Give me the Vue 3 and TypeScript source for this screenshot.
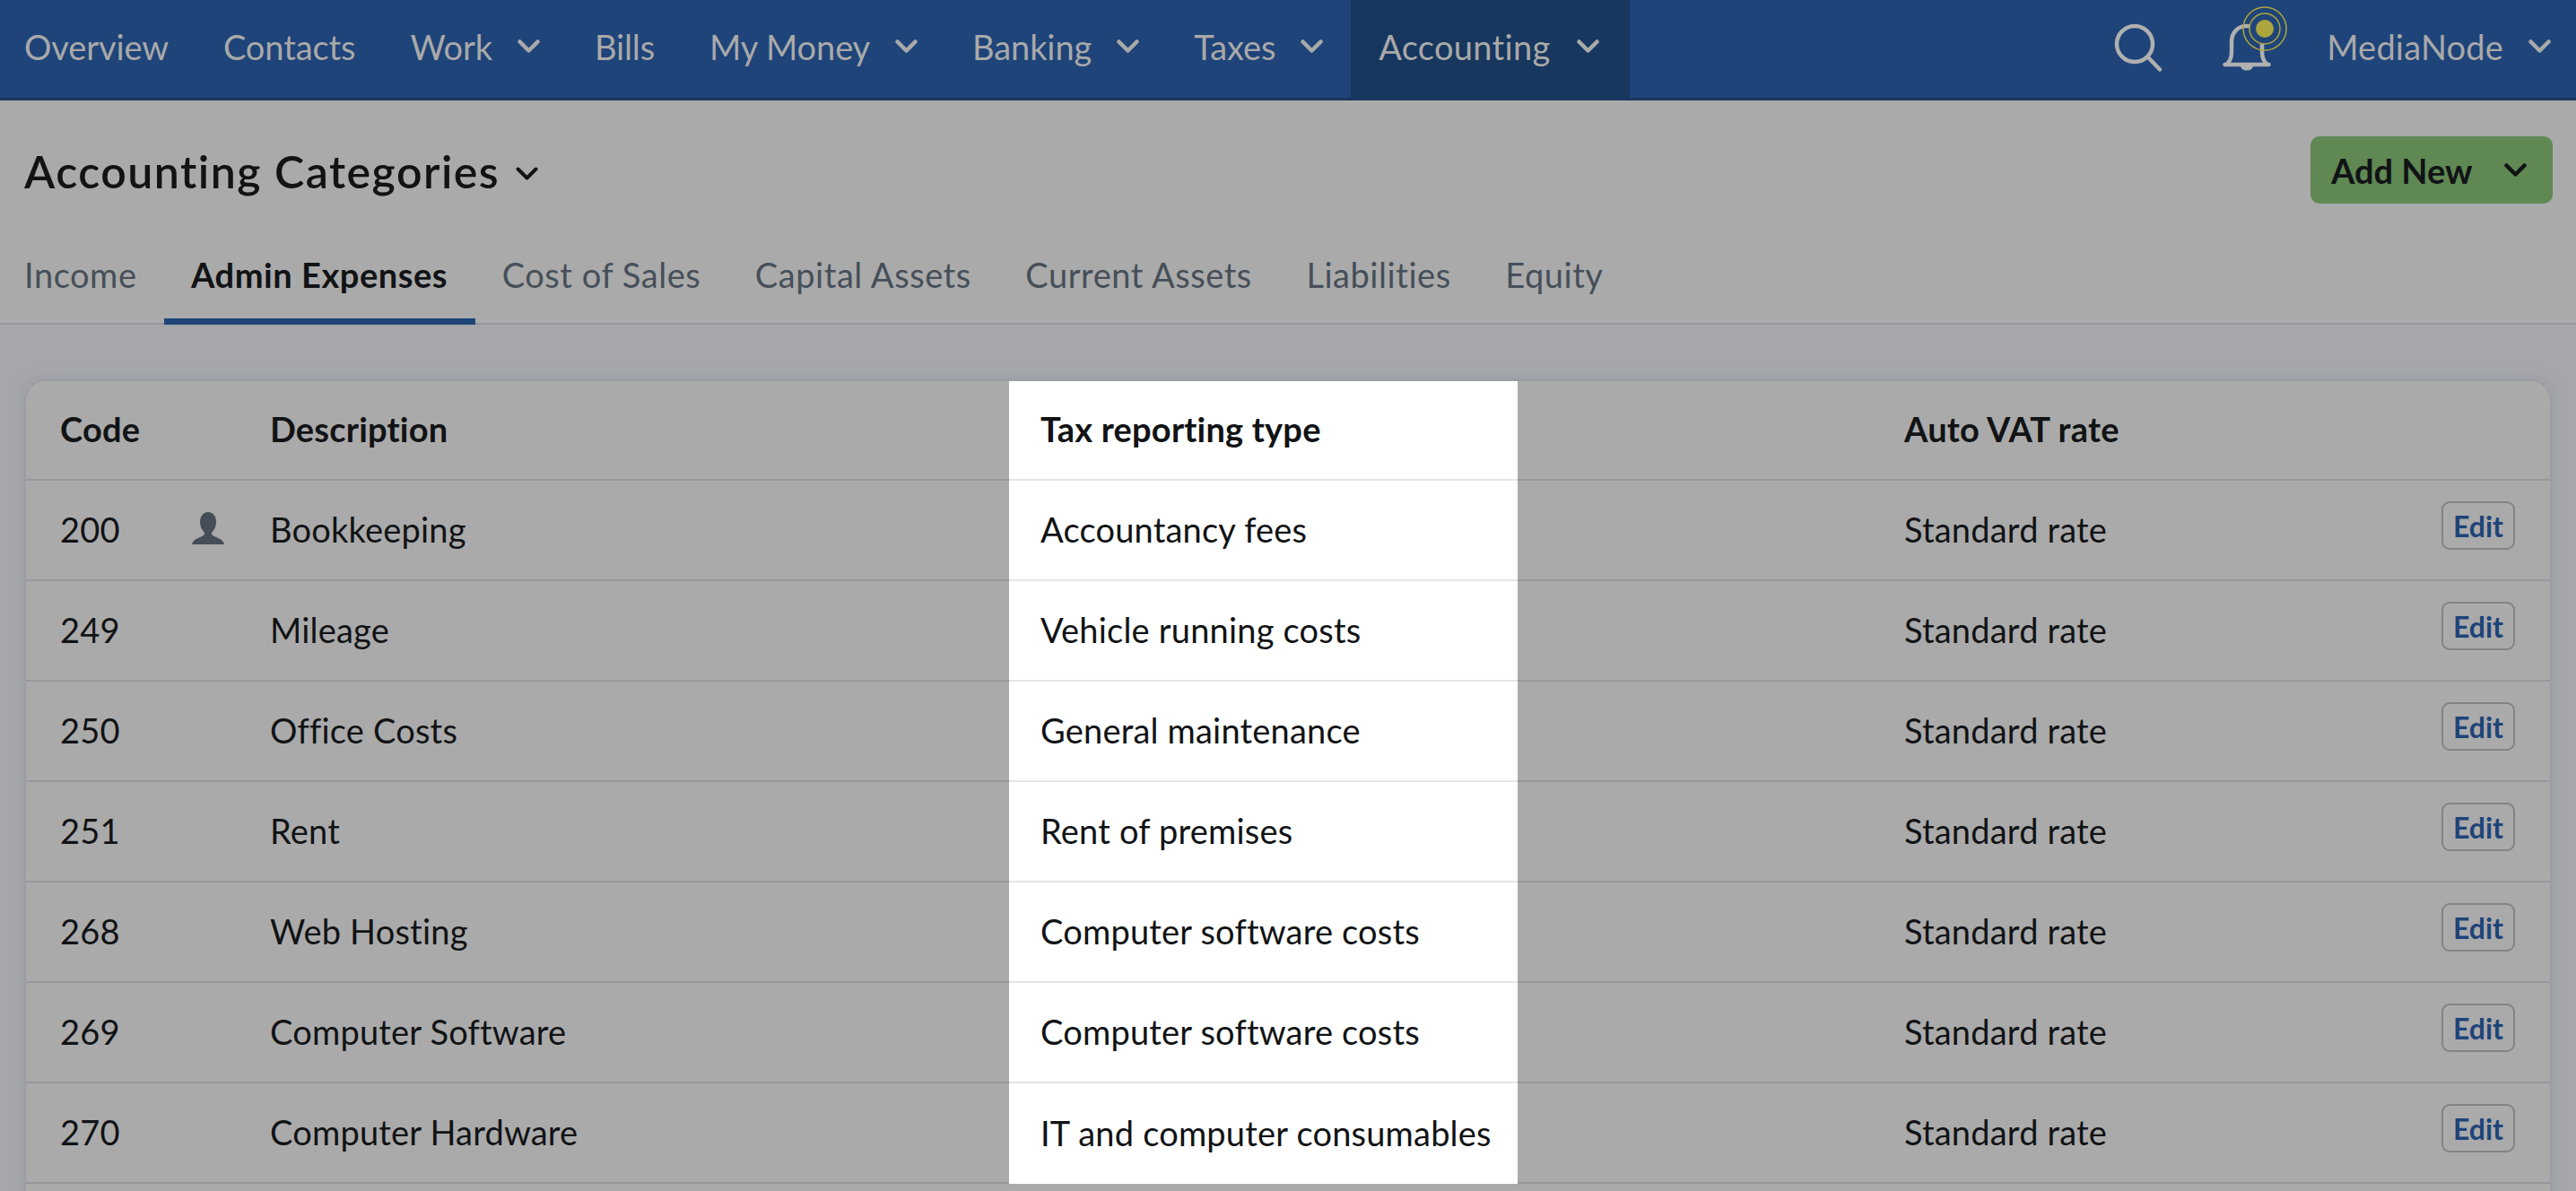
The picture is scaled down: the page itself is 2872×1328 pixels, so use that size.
<script setup lang="ts">
interface NavItem {
  label: string
  menu?: boolean
  active?: boolean
}

interface Category {
  code: string
  description: string
  taxType: string
  custom?: boolean
}

// 顶部导航
const navItems: NavItem[] = [
  { label: 'Overview' },
  { label: 'Contacts' },
  { label: 'Work', menu: true },
  { label: 'Bills' },
  { label: 'My Money', menu: true },
  { label: 'Banking', menu: true },
  { label: 'Taxes', menu: true },
  { label: 'Accounting', menu: true, active: true }
]

const tabs = ['Income', 'Admin Expenses', 'Cost of Sales', 'Capital Assets', 'Current Assets', 'Liabilities', 'Equity']

const categories: Category[] = [
  { code: '200', description: 'Bookkeeping', taxType: 'Accountancy fees', custom: true },
  { code: '249', description: 'Mileage', taxType: 'Vehicle running costs' },
  { code: '250', description: 'Office Costs', taxType: 'General maintenance' },
  { code: '251', description: 'Rent', taxType: 'Rent of premises' },
  { code: '268', description: 'Web Hosting', taxType: 'Computer software costs' },
  { code: '269', description: 'Computer Software', taxType: 'Computer software costs' },
  { code: '270', description: 'Computer Hardware', taxType: 'IT and computer consumables' }
]
</script>

<template>
  <div class="page">
    <header class="topbar">
      <nav class="nav">
        <a v-for="item in navItems" :key="item.label" class="nav-item" :class="{ active: item.active }">
          {{ item.label }}
          <svg v-if="item.menu" class="chev" viewBox="0 0 25 15"><path d="M2.5 2.5 12.5 12.5 22.5 2.5" /></svg>
        </a>
      </nav>
      <div class="tools">
        <svg class="search" viewBox="0 0 56 56">
          <circle cx="24" cy="24" r="20" />
          <path d="M39 39 52 52.5" />
        </svg>
        <svg class="bell" viewBox="0 0 76 76">
          <path d="M3.5 66h49M5 66c4-3 6-7 6-14V41c0-11 7-18 17-18s17 7 17 18v11c0 7 2 11 6 14" />
          <path class="clapper" d="M21 67h14c0 3.500-3 5.500-7 5.500s-7-2-7-5.500z" />
          <circle class="ring" cx="48" cy="26" r="24" />
          <circle class="ring inner" cx="48" cy="26" r="17" />
          <circle class="dot" cx="48" cy="26" r="10" />
        </svg>
        <a class="user">
          MediaNode
          <svg class="chev" viewBox="0 0 25 15"><path d="M2.5 2.5 12.5 12.5 22.5 2.5" /></svg>
        </a>
      </div>
    </header>

    <div class="page-head">
      <h1 class="title">
        Accounting Categories
        <svg class="chev" viewBox="0 0 25 15"><path d="M2.5 2.5 12.5 12.5 22.5 2.5" /></svg>
      </h1>
      <button class="add-btn">
        Add New
        <svg class="chev" viewBox="0 0 25 15"><path d="M2.5 2.5 12.5 12.5 22.5 2.5" /></svg>
      </button>
    </div>

    <div class="tabs">
      <a v-for="tab in tabs" :key="tab" class="tab" :class="{ current: tab === 'Admin Expenses' }">{{ tab }}</a>
    </div>

    <section class="content">
      <div class="card">
        <div class="row head">
          <div class="cell">Code</div>
          <div class="cell"></div>
          <div class="cell">Description</div>
          <div class="cell spot">Tax reporting type</div>
          <div class="cell"></div>
          <div class="cell">Auto VAT rate</div>
          <div class="cell"></div>
        </div>
        <div v-for="cat in categories" :key="cat.code" class="row">
          <div class="cell">{{ cat.code }}</div>
          <div class="cell">
            <svg v-if="cat.custom" class="person" viewBox="0 0 36 36">
              <path d="M18 0c6 0 9 5 9 11 0 5-2 9-5 12-.5 2 1 3.500 5 5 5 2 8 4 9 8H0c1-4 4-6 9-8 4-1.500 5.500-3 5-5-3-3-5-7-5-12C9 5 12 0 18 0z" />
            </svg>
          </div>
          <div class="cell">{{ cat.description }}</div>
          <div class="cell spot">{{ cat.taxType }}</div>
          <div class="cell"></div>
          <div class="cell">Standard rate</div>
          <div class="cell edit-cell"><button class="edit-btn">Edit</button></div>
        </div>
      </div>
    </section>
  </div>
</template>

<style>
html,
body {
  margin: 0;
  background: #a5a7ab;
}
</style>

<style scoped>
.page {
  height: 1328px;
  overflow: hidden;
  background: #aaaaaa;
  color: #111315;
  font-family: Lato, "Liberation Sans", sans-serif;
  font-size: 38px;
  letter-spacing: 0.2px;
}

/* 顶部栏 */
.topbar {
  display: flex;
  justify-content: space-between;
  height: 112px;
  box-sizing: border-box;
  background: #1e4479;
  border-bottom: 3px solid #19375f;
  color: #a9a9a9;
}

.nav {
  display: flex;
  margin-left: -3px;
  letter-spacing: -0.1px;
}

.nav-item {
  display: flex;
  align-items: center;
  gap: 28px;
  padding: 0 31px 6px 30px;
}

.nav-item.active {
  gap: 30px;
  padding-left: 31px;
  padding-right: 34px;
  background: #17375f;
  letter-spacing: 0.3px;
}

.chev {
  width: 25px;
  height: 15px;
  fill: none;
  stroke: currentColor;
  stroke-width: 4.5;
  stroke-linecap: round;
  stroke-linejoin: round;
}

.tools {
  display: flex;
  align-items: center;
  padding-right: 28px;
}

.search {
  width: 56px;
  height: 56px;
  margin-bottom: 3px;
  fill: none;
  stroke: #b0b0b0;
  stroke-width: 4.5;
  stroke-linecap: round;
}

.bell {
  width: 76px;
  height: 76px;
  margin-left: 65px;
  margin-bottom: 21px;
  fill: none;
  stroke: #b0b0b0;
  stroke-width: 4.5;
  stroke-linecap: round;
  overflow: visible;
}

.bell .clapper {
  fill: #b0b0b0;
  stroke: none;
}

.bell .ring {
  stroke: #ada53d;
  stroke-width: 1.5;
}

.bell .ring.inner {
  fill: #1e4479;
}

.bell .dot {
  fill: #ada53d;
  stroke: none;
}

.user {
  display: flex;
  align-items: center;
  gap: 28px;
  margin-left: 41px;
  padding-bottom: 6px;
}

/* 标题 */
.page-head {
  display: flex;
  justify-content: space-between;
  align-items: flex-start;
  padding: 40px 26px 0 27px;
  height: 122px;
  box-sizing: border-box;
}

.title {
  display: flex;
  align-items: center;
  gap: 18px;
  margin: 0;
  margin-top: 10px;
  font-size: 50px;
  font-weight: 600;
  line-height: 58px;
  letter-spacing: 1.5px;
}

.title .chev {
  margin-top: 4px;
  stroke-width: 4;
}

.add-btn {
  display: flex;
  align-items: center;
  gap: 35px;
  width: 270px;
  height: 75px;
  padding: 0 0 0 23px;
  border: 0;
  border-radius: 10px;
  background: #5f8853;
  color: #111315;
  font-family: inherit;
  font-size: 38px;
  font-weight: 700;
}

/* 标签页 */
.tabs {
  display: flex;
  height: 128px;
  box-sizing: border-box;
  padding-left: 27px;
  gap: 60.5px;
  border-bottom: 2px solid #97989d;
  color: #464f59;
  letter-spacing: 0.55px;
}

.tab {
  position: relative;
  padding-top: 47px;
  line-height: 50px;
}

.tab.current {
  color: #111315;
  font-weight: 700;
}

.tab.current::after {
  content: "";
  position: absolute;
  left: -30px;
  right: -31px;
  bottom: -2px;
  height: 7px;
  background: #1e4479;
}

/* 表格 */
.content {
  background: #a5a7ab;
  padding: 61px 27px 0;
  height: 966px;
  box-sizing: border-box;
}

.card {
  position: relative;
  height: 1000px;
  background: #aaaaaa;
  border: 2px solid #9b9ea3;
  border-radius: 24px 24px 0 0;
  box-shadow: 0 0 16px rgba(130, 134, 142, 0.35);
}

.row {
  display: grid;
  grid-template-columns: 185px 87px 824px 567px 431px 1fr 121px;
  height: 112px;
  box-sizing: border-box;
  border-bottom: 2px solid #97989d;
}

.row.head {
  height: 111px;
  font-weight: 700;
}

.cell {
  display: flex;
  align-items: center;
  padding-bottom: 3px;
}

.cell:first-child {
  padding-left: 38px;
}

.cell.spot {
  padding-left: 35px;
  margin-bottom: -2px;
  background: #ffffff;
  border-bottom: 2px solid #e4e4ea;
}

.row:last-child .cell.spot {
  border-bottom: 0;
}

.person {
  width: 36px;
  height: 36px;
  margin-bottom: 2px;
  fill: #454e57;
}

.edit-btn {
  width: 82px;
  height: 54px;
  margin-bottom: 7px;
  padding: 0;
  border: 2px solid #818387;
  border-radius: 9px;
  background: transparent;
  color: #1e4479;
  font-family: inherit;
  font-size: 32px;
  font-weight: 700;
}
</style>
